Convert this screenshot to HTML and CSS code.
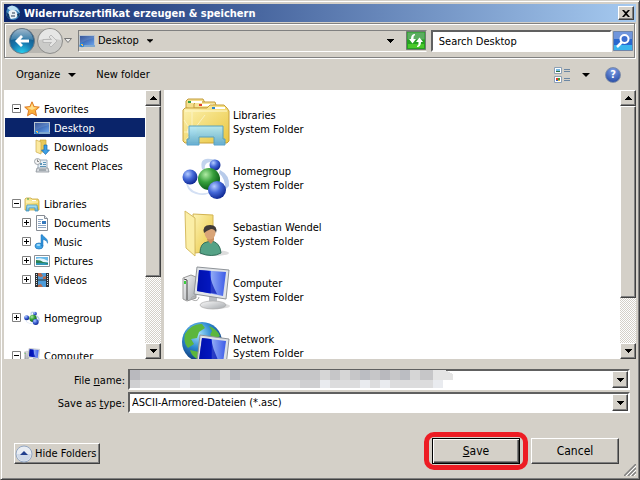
FILE: index.html
```html
<!DOCTYPE html>
<html lang="en">
<head>
    <meta charset="UTF-8">
    <meta name="viewport" content="width=device-width, initial-scale=1.0">
    <title>Widerrufszertifikat erzeugen &amp; speichern</title>
    <link rel="stylesheet" href="styles.css">
</head>
<body>
    <!-- Shared icons -->
    <svg class="sprites" aria-hidden="true">
        <defs>
            <linearGradient id="screen" x1="0" y1="0" x2="1" y2="1">
                <stop offset="0" stop-color="#1c3f8c"/><stop offset="1" stop-color="#6aa2ea"/>
            </linearGradient>
            <linearGradient id="blue-screen" x1="0" y1="0" x2="1" y2="0">
                <stop offset="0" stop-color="#0012a8"/><stop offset=".45" stop-color="#0d2be0"/><stop offset=".5" stop-color="#8fa8f4"/><stop offset="1" stop-color="#3c5be8"/>
            </linearGradient>
            <linearGradient id="folder" x1="0" y1="0" x2="1" y2="1">
                <stop offset="0" stop-color="#fdf3b4"/><stop offset="1" stop-color="#e9c640"/>
            </linearGradient>
            <linearGradient id="stand" x1="0" y1="0" x2="0" y2="1">
                <stop offset="0" stop-color="#b5eaf6"/><stop offset="1" stop-color="#5cabd6"/>
            </linearGradient>
            <radialGradient id="ball-blue" cx=".35" cy=".3" r=".7">
                <stop offset="0" stop-color="#b4ccff"/><stop offset=".5" stop-color="#4468d8"/><stop offset="1" stop-color="#122c96"/>
            </radialGradient>
            <radialGradient id="ball-green" cx=".35" cy=".3" r=".7">
                <stop offset="0" stop-color="#b0eba4"/><stop offset=".5" stop-color="#37a03c"/><stop offset="1" stop-color="#0c5e18"/>
            </radialGradient>
            <linearGradient id="grey" x1="0" y1="0" x2="1" y2="1">
                <stop offset="0" stop-color="#fafafa"/><stop offset="1" stop-color="#a4a8ac"/>
            </linearGradient>
            <radialGradient id="back" cx=".5" cy="1" r=".9">
                <stop offset="0" stop-color="#29d5f3"/><stop offset=".5" stop-color="#1577ae"/><stop offset="1" stop-color="#174b78"/>
            </radialGradient>
            <linearGradient id="gloss" x1="0" y1="0" x2="0" y2="1">
                <stop offset="0" stop-color="#e4f2fa"/><stop offset="1" stop-color="#4a8ab2"/>
            </linearGradient>
            <radialGradient id="globe" cx=".4" cy=".3" r=".7">
                <stop offset="0" stop-color="#a6e4ff"/><stop offset=".5" stop-color="#2c88d0"/><stop offset="1" stop-color="#0d3576"/>
            </radialGradient>
        </defs>
        <symbol id="i-desktop" viewBox="0 0 16 16">
            <path d="M0 2h16v12H0z" fill="#b8c4d0"/>
            <path d="M1 3h14v9H1z" fill="url(#screen)"/>
            <path d="M1 3h14v2Q6 7 1 11z" fill="#fff" opacity=".12"/>
            <path d="M0 12h16v2H0z" fill="#7ea7cf"/>
            <circle cx="3" cy="12" r="2.3" fill="#2c83d8"/>
            <path d="M2 11h1v1H2zM3 12h1v1H3z" fill="#f4d84c"/><path d="M3 11h1v1H3z" fill="#e86"/>
        </symbol>
        <symbol id="i-star" viewBox="0 0 16 16">
            <path d="M8 .8l2.1 4.8 5.2.5-3.9 3.5 1.1 5.2L8 12.1l-4.5 2.7 1.1-5.2L.7 6.1l5.2-.5z" fill="#fbb03c" stroke="#d9711a" stroke-width=".9"/>
            <path d="M8 2.5l1.5 3.7 3.6.4L8 9 3 6.700l3.500-.5z" fill="#ffdf8c"/>
        </symbol>
        <symbol id="i-downloads" viewBox="0 0 16 16">
            <path d="M6 1h6v12H6z" fill="#e8c95a" stroke="#c9a437" stroke-width=".7"/>
            <path d="M2 1l5 2v12l-5-2z" fill="#fbe9a0" stroke="#cfae4a" stroke-width=".7"/>
            <path d="M10 6h3v5h2.500L11.500 15.500 7.500 11H10z" fill="#3da0e6" stroke="#1767ac" stroke-width=".7"/>
        </symbol>
        <symbol id="i-recent" viewBox="0 0 16 16">
            <path d="M4 2h9v9H4z" fill="#e6eff5" stroke="#899bab" stroke-width=".8"/>
            <path d="M6 5h2v2H6zM9 4h3v1H9zM9 6h3v1H9zM6 8h6v1H6z" fill="#5b94b8"/>
            <path d="M3 10h11l1 4H2z" fill="#d6dade" stroke="#8a9299" stroke-width=".8"/>
            <path d="M5 12h7" stroke="#6d7880"/>
            <circle cx="3.500" cy="3.500" r="3" fill="#f3f3f3" stroke="#8d959c" stroke-width=".8"/>
            <path d="M3.500 1.500v2h1.500" fill="none" stroke="#555" stroke-width=".7"/>
        </symbol>
        <symbol id="i-library" viewBox="0 0 16 16">
            <path d="M1 3l1-1h5l1 1h6l1 2v9H1z" fill="url(#folder)" stroke="#c9a63c" stroke-width=".8"/>
            <path d="M3 3h2" stroke="#3f9d46"/><path d="M8 4.500h4" stroke="#fff"/><path d="M2 6h12" stroke="#fff6c4"/>
            <path d="M3 9h10l1 6h-3v-3H5v3H2z" fill="url(#stand)" stroke="#4596be" stroke-width=".8"/>
        </symbol>
        <symbol id="i-document" viewBox="0 0 16 16">
            <path d="M2.500.5h8l3 3v12h-11z" fill="#fff" stroke="#868c94"/>
            <path d="M10.500.5v3h3" fill="#dfe6ee" stroke="#868c94"/>
            <path d="M4 4.500h5M4 6.500h3M4 8.500h3M4 10.500h8M4 12.500h8" stroke="#8ea6c2"/>
            <path d="M8 6h4v3H8z" fill="#3679bd"/>
        </symbol>
        <symbol id="i-music" viewBox="0 0 16 16">
            <ellipse cx="5" cy="12" rx="4" ry="3" fill="#42a9ea" stroke="#1c6fb4" stroke-width=".7"/>
            <path d="M7 12V.8h1.500c1 3 6 3.200 5 8.500-.5-2.300-2-3.300-4.500-3.800V12z" fill="#2f94dc" stroke="#1c6fb4" stroke-width=".5"/>
            <ellipse cx="4.500" cy="11" rx="2" ry="1" fill="#a5dcfa"/>
        </symbol>
        <symbol id="i-pictures" viewBox="0 0 16 16">
            <path d="M.5 2.500h15v11H.5z" fill="#fff" stroke="#8b9198"/>
            <path d="M2 4h12v8H2z" fill="#69b9e8"/><path d="M2 6q6-2 12 2v1H2z" fill="#e4f6fb"/>
            <path d="M2 7q5 0 7 2l5 1v2H2z" fill="#2c8250"/><path d="M2 10q6-1 12 1v1H2z" fill="#2f96b8"/>
        </symbol>
        <symbol id="i-videos" viewBox="0 0 16 16">
            <path d="M1 1h14v14H1z" fill="#2e3338"/><path d="M4 1h8v6.500H4zM4 8.500h8V15H4z" fill="#4d9bd8"/>
            <path d="M4 1h3l2 3-2 1-3-1zM9 5l3-1v3H9zM4 15v-2l3-1 2 3z" fill="#b8694c"/>
            <path d="M2.500 2v12M13.500 2v12" stroke="#dfe6ea" stroke-dasharray="1 1"/>
        </symbol>
        <symbol id="i-homegroup" viewBox="0 0 48 48">
            <path d="M20 15Q17 3 29 5q8 0 9 7-7-6-13-3-3 2-2 7z" fill="#c3d4ee"/>
            <path d="M4 24q2 13 13 15 8 1 12-2-4 6-15 3Q3 37 4 24z" fill="#d4e0f4"/>
            <path d="M38 16q10 5 9 16l-4 4q1-11-6-17z" fill="#b8cbea"/>
            <circle cx="33" cy="11" r="5.500" fill="url(#ball-blue)"/>
            <circle cx="8" cy="23" r="7.500" fill="url(#ball-blue)"/>
            <circle cx="27" cy="25" r="11" fill="url(#ball-green)"/>
            <circle cx="35" cy="36" r="9" fill="url(#ball-blue)"/>
        </symbol>
        <symbol id="i-computer" viewBox="0 0 48 48">
            <ellipse cx="34" cy="40" rx="14" ry="3" fill="#ddd"/>
            <path d="M1 12l8-3 5 2v21l-9 3-4-2z" fill="url(#grey)" stroke="#999"/>
            <path d="M2 13l3 1v20" fill="none" stroke="#444"/><path d="M2 15h2v3H2z" fill="#3bd13e"/>
            <path d="M13 30q-7 2-2 4t6-3" fill="none" stroke="#aaa"/>
            <path d="M27 30h8v7h-8z" fill="#b9bdc2"/>
            <ellipse cx="31" cy="39" rx="13" ry="4" fill="url(#grey)" stroke="#aaa" stroke-width=".7"/>
            <path d="M15 1l32 3-3 29-32-5z" fill="#e1e4e8" stroke="#8f9499"/>
            <path d="M17 4l27 2-3 24-26-5z" fill="url(#blue-screen)"/>
            <path d="M17 4l10 1q2 12 8 23l-20-3z" fill="#0010b0" opacity=".7"/>
        </symbol>
        <symbol id="i-expand" viewBox="0 0 9 9">
            <path d="M.5.5h8v8h-8z" fill="#fff" stroke="#808080"/><path d="M2 4.500h5M4.500 2v5" stroke="#000"/>
        </symbol>
        <symbol id="i-collapse" viewBox="0 0 9 9">
            <path d="M.5.5h8v8h-8z" fill="#fff" stroke="#808080"/><path d="M2 4.500h5" stroke="#000"/>
        </symbol>
        <symbol id="i-down" viewBox="0 0 7 4"><path d="M0 0h7v1H6v1H5v1H4v1H3V3H2V2H1V1H0z"/></symbol>
        <symbol id="i-up" viewBox="0 0 7 4"><path d="M3 0h1v1h1v1h1v1h1v1H0V3h1V2h1V1h1z"/></symbol>
    </svg>

    <form class="window">
        <!-- Title bar -->
        <header class="titlebar">
            <svg class="icon" viewBox="0 0 16 16">
                <circle cx="8" cy="8" r="7" fill="#3d86bd"/>
                <path d="M2 3Q7-2 12 3l3 5-4-3-5 1z" fill="#b9dff5"/>
                <path d="M4 6q4-2 7 0l2 4-2 3-5 1-3-4z" fill="#e9f1f6"/>
                <path d="M1 7l3 2 1 5-3-2z" fill="#133e6e"/><path d="M7 8h3M6 11h4" stroke="#24364c"/><path d="M12 9l3-1-2 5z" fill="#123862"/>
            </svg>
            <h1>Widerrufszertifikat erzeugen &amp; speichern</h1>
            <button type="button" class="close" aria-label="Close">
                <svg width="8" height="7" viewBox="0 0 8 7"><path d="M0 0h2l2 2 2-2h2L5 3.500 8 7H6L4 5 2 7H0l3-3.500z"/></svg>
            </button>
        </header>

        <!-- Navigation bar -->
        <nav class="navbar">
            <button type="button" class="flat" aria-label="Back">
                <svg width="28" height="28" viewBox="0 0 28 28">
                    <path d="M14 2h14v24H14z" fill="#b9b7b2"/>
                    <circle cx="14" cy="14" r="12.500" fill="url(#back)" stroke="#6b7883"/>
                    <path d="M3 13a11 11 0 0 1 22 0q-11-3-22 0z" fill="url(#gloss)" opacity=".65"/>
                    <path d="M7 14l6-6 2 2-2.500 2.500H21v3h-8.500L15 18l-2 2z" fill="#fff"/>
                </svg>
            </button>
            <button type="button" class="flat" aria-label="Forward">
                <svg width="28" height="28" viewBox="0 0 28 28">
                    <path d="M0 2h14v24H0z" fill="#b9b7b2"/>
                    <circle cx="14" cy="14" r="12.500" fill="#cbcbc9" stroke="#8d8d8b"/>
                    <path d="M3 13a11 11 0 0 1 22 0q-11-3-22 0z" fill="#e6e6e5"/>
                    <path d="M21 14l-6-6-2 2 2.500 2.500H7v3h8.500L13 18l2 2z" fill="#e4e4e3" stroke="#aaa" stroke-width=".7"/>
                </svg>
            </button>
            <button type="button" class="flat history" aria-label="Recent pages">
                <svg width="8" height="6" viewBox="0 0 8 6"><path d="M.5.5h7L4 4.500z" fill="#eee" stroke="#777"/></svg>
            </button>
            <div class="address">
                <svg class="icon"><use href="#i-desktop"/></svg>
                <a href="#">Desktop</a>
                <svg class="arrow small"><use href="#i-down"/></svg>
                <button type="button" class="flat open" aria-label="Previous locations"><svg class="arrow"><use href="#i-down"/></svg></button>
                <button type="button" class="flat" aria-label="Refresh">
                    <svg width="20" height="19" viewBox="0 0 20 19">
                        <path d="M.5.5h19v18H.5z" fill="#25a022" stroke="#6f7c70"/><path d="M1.500 1.500h17v7h-17z" fill="#5cad60"/><path d="M2 13h16v4H2z" fill="#48c92a"/>
                        <path d="M9 3v1Q7 5 7.500 8H10l-3.500 4.500L3 8h2q0-5 4-5zM11 16v-1q2-1 1.500-4H10l3.500-4.500L17 11h-2q0 5-4 5z" fill="#fff"/>
                    </svg>
                </button>
            </div>
            <input type="text" class="search" aria-label="Search Desktop" value="Search Desktop">
            <button type="button" class="flat" aria-label="Search">
                <svg width="20" height="20" viewBox="0 0 20 20">
                    <path d="M.5.5h19v19H.5z" fill="#2868cf" stroke="#6e85aa"/><path d="M1 1h18v7H1z" fill="#7096dc"/><path d="M1 14h18v5H1z" fill="#39b4ee"/>
                    <path d="M9 11l-5 5" stroke="#fff" stroke-width="2.500"/><circle cx="11.500" cy="8" r="4" fill="#3d6fcf" stroke="#fff" stroke-width="2"/>
                </svg>
            </button>
        </nav>

        <!-- Toolbar -->
        <div class="toolbar">
            <button type="button" class="flat">Organize <svg class="arrow"><use href="#i-down"/></svg></button>
            <button type="button" class="flat">New folder</button>
            <button type="button" class="flat view" aria-label="Change your view">
                <svg width="16" height="16" viewBox="0 0 16 16">
                    <path d="M.5.5h7v6h-7zM.5 9.500h7v6h-7z" fill="#fff" stroke="#8da0b4"/>
                    <path d="M2 2h4v2H2z" fill="#76b9e4"/><path d="M2 4h4v1H2z" fill="#2f6d3a"/>
                    <path d="M2 11h2v2H2z" fill="#d83a2c"/><path d="M4 11h2v2H4z" fill="#3a9d3c"/><path d="M2 13h2v1H2z" fill="#345bc8"/><path d="M4 13h2v1H4z" fill="#e8b92e"/>
                    <path d="M10 2.500h6M10 4.500h6M10 11.500h6M10 13.500h6" stroke="#6c87a3"/>
                </svg>
                <svg class="arrow"><use href="#i-down"/></svg>
            </button>
            <button type="button" class="flat help" aria-label="Help">?</button>
        </div>

        <!-- Folder tree and file list -->
        <main class="panes">
            <div class="pane side">
                <ul class="tree">
                    <li><svg class="box"><use href="#i-collapse"/></svg><svg class="icon"><use href="#i-star"/></svg><span>Favorites</span></li>
                    <li class="sub selected"><i class="box"></i><svg class="icon"><use href="#i-desktop"/></svg><span>Desktop</span></li>
                    <li class="sub"><i class="box"></i><svg class="icon"><use href="#i-downloads"/></svg><span>Downloads</span></li>
                    <li class="sub"><i class="box"></i><svg class="icon"><use href="#i-recent"/></svg><span>Recent Places</span></li>
                    <li class="group"><svg class="box"><use href="#i-collapse"/></svg><svg class="icon"><use href="#i-library"/></svg><span>Libraries</span></li>
                    <li class="sub"><svg class="box"><use href="#i-expand"/></svg><svg class="icon"><use href="#i-document"/></svg><span>Documents</span></li>
                    <li class="sub"><svg class="box"><use href="#i-expand"/></svg><svg class="icon"><use href="#i-music"/></svg><span>Music</span></li>
                    <li class="sub"><svg class="box"><use href="#i-expand"/></svg><svg class="icon"><use href="#i-pictures"/></svg><span>Pictures</span></li>
                    <li class="sub"><svg class="box"><use href="#i-expand"/></svg><svg class="icon"><use href="#i-videos"/></svg><span>Videos</span></li>
                    <li class="group"><svg class="box"><use href="#i-expand"/></svg><svg class="icon"><use href="#i-homegroup"/></svg><span>Homegroup</span></li>
                    <li class="group"><svg class="box"><use href="#i-collapse"/></svg><svg class="icon"><use href="#i-computer"/></svg><span>Computer</span></li>
                </ul>
                <div class="scrollbar">
                    <button type="button" aria-label="Scroll up"><svg class="arrow"><use href="#i-up"/></svg></button>
                    <div class="track"><div class="thumb"></div></div>
                    <button type="button" aria-label="Scroll down"><svg class="arrow"><use href="#i-down"/></svg></button>
                </div>
            </div>
            <div class="pane content">
                <ul class="files">
                    <li>
                        <svg class="large" viewBox="0 0 48 48">
                            <path d="M4 10V3l2-2h15l2 4v8z" fill="#f4de8c" stroke="#c29c3c"/><path d="M12 10V6l2-2h19l2 6z" fill="#f6e396" stroke="#c29c3c"/>
                            <path d="M9 3h11v2H9zM20 6h11v2H20z" fill="#fff"/><path d="M6 3h3v2H6z" fill="#37a046"/><path d="M17 6h3v2h-3z" fill="#e2422e"/>
                            <path d="M1 12l2-2h22l3-3h14l3 3 2 3v30l-2 2H3l-2-2z" fill="url(#folder)" stroke="#c8a03a"/>
                            <path d="M33 9h10v2H33z" fill="#fff"/><path d="M30 9h3v2h-3z" fill="#2f86cc"/>
                            <path d="M3 13h42" stroke="#fff9d0"/>
                            <path d="M10 34L2 22M10 34l0-20M10 34L23 17M10 34H2M10 34l-7 9" stroke="#fffbe0" opacity=".6"/>
                            <circle cx="10" cy="33" r="5" fill="#fff" opacity=".5"/>
                            <path d="M7 28h34v13h2v6H32v-8H17v8H5v-6h2z" fill="url(#stand)" stroke="#4d9cc4" opacity=".92"/>
                        </svg>
                        <p>Libraries<br>System Folder</p>
                    </li>
                    <li>
                        <svg class="large"><use href="#i-homegroup"/></svg>
                        <p>Homegroup<br>System Folder</p>
                    </li>
                    <li>
                        <svg class="large" viewBox="0 0 48 48">
                            <ellipse cx="32" cy="43" rx="15" ry="3" fill="#ddd"/>
                            <path d="M11 4l20 1v36l-18 2z" fill="url(#folder)" stroke="#d3b452"/>
                            <path d="M3 1l10 7v38L4 38z" fill="#fbeea6" stroke="#d6bc62"/>
                            <path d="M18 43q0-10 7-11l4-1q9 1 10 12-9 5-21 0z" fill="#55a286" stroke="#34705c"/>
                            <path d="M25 30l4 4 3-4v-4h-6z" fill="#c98f60"/>
                            <ellipse cx="28" cy="23" rx="5.500" ry="6.500" fill="#d9a477"/>
                            <path d="M22 23q-2-8 6-8 8 0 6 8-1-4-5-4-5 2-7 4z" fill="#3f3a38"/>
                        </svg>
                        <p>Sebastian Wendel<br>System Folder</p>
                    </li>
                    <li>
                        <svg class="large"><use href="#i-computer"/></svg>
                        <p>Computer<br>System Folder</p>
                    </li>
                    <li>
                        <svg class="large" viewBox="0 0 48 48">
                            <circle cx="20" cy="20" r="20" fill="url(#globe)"/>
                            <path d="M3 12Q10 1 20 2l3 4-6 4-2 6-6 1 3 5-6 4q-5-6-3-14zM27 4q8 3 11 10l-5 3-5-4 2-4zM8 28l9 2 1 8q-8-2-10-10z" fill="#5cb63c"/>
                            <path d="M18 13l29 4-3 27-29-4z" fill="#dde1e6" stroke="#8f9499"/>
                            <path d="M20 16l24 3-3 22-24-3z" fill="url(#blue-screen)"/>
                            <path d="M20 16l9 1q2 11 8 23l-20-2z" fill="#0010b0" opacity=".7"/>
                        </svg>
                        <p>Network<br>System Folder</p>
                    </li>
                </ul>
                <div class="scrollbar">
                    <button type="button" aria-label="Scroll up"><svg class="arrow"><use href="#i-up"/></svg></button>
                    <div class="track"><div class="thumb"></div></div>
                    <button type="button" aria-label="Scroll down"><svg class="arrow"><use href="#i-down"/></svg></button>
                </div>
            </div>
        </main>

        <!-- File name and type -->
        <footer class="bottom">
            <div class="fields">
                <label for="file-name">File <u>n</u>ame:</label>
                <div class="combo">
                    <input type="text" id="file-name">
                    <button type="button" aria-label="Show names"><svg class="arrow"><use href="#i-down"/></svg></button>
                    <!-- Hidden file name -->
                    <svg class="mosaic" width="323" height="18" viewBox="0 0 323 18" shape-rendering="crispEdges">
                        <path d="M0 0h315l8 4v6H0z" fill="#c6c6c8"/><path d="M0 10h313v8H0z" fill="#dcdcdd"/>
                        <path d="M0 0h10v10H0zM80 0h10v10H80zM140 0h10v10h-10zM250 0h10v10h-10z" fill="#b9b9be"/>
                        <path d="M90 0h10v10H90zM190 0h10v10h-10zM210 0h10v10h-10zM280 0h10v10h-10z" fill="#d6d6d6"/>
                        <path d="M60 0h10v10H60zM100 0h10v10h-10zM230 0h10v10h-10zM270 0h10v10h-10z" fill="#bbbdc2"/>
                        <path d="M303 0h12l8 4v6h-20z" fill="#e4e4e4"/>
                        <path d="M0 10h10v8H0zM110 10h20v8h-20zM170 10h20v8h-20z" fill="#cfcfd1"/>
                        <path d="M50 10h10v8H50zM190 10h10v8h-10zM230 10h10v8h-10zM250 10h10v8h-10zM303 10h10v8h-10z" fill="#e9ebef"/>
                    </svg>
                </div>
                <label for="file-type">Save as <u>t</u>ype:</label>
                <div class="combo">
                    <select id="file-type"><option>ASCII-Armored-Dateien (*.asc)</option></select>
                    <button type="button" aria-label="Show types"><svg class="arrow"><use href="#i-down"/></svg></button>
                </div>
            </div>
            <div class="actions">
                <button type="button" class="push hide">
                    <svg width="18" height="18" viewBox="0 0 18 18"><circle cx="9" cy="9" r="8" fill="#e9edf3" stroke="#93a7c4"/><path d="M2 9a7 7 0 0 0 14 0z" fill="#cfd9e8"/><path d="M9 6l4 4H5z" fill="#213f8e"/></svg>
                    Hide Folders
                </button>
                <div class="marked"><button type="submit" class="push default"><u>S</u>ave</button></div>
                <button type="button" class="push">Cancel</button>
            </div>
            <svg class="grip" width="12" height="12" viewBox="0 0 12 12"><path d="M0 12L12 0M4 12l8-8M8 12l4-4" stroke="#808080" stroke-width="1.500"/><path d="M2 12L12 2M6 12l6-6M10 12l2-2" stroke="#fff"/></svg>
        </footer>
    </form>
</body>
</html>
```
FILE: styles.css
```css
* {
    box-sizing: border-box;
}
body {
    margin: 0;
    background: #d4d0c8;
    color: #000;
}
body, button, input, select {
    font-family: "DejaVu Sans Condensed", "DejaVu Sans", sans-serif;
    font-size: 11px;
    line-height: 14px;
}
ul, p, h1 {
    margin: 0;
    padding: 0;
    list-style: none;
}
svg {
    display: block;
    flex: none;
}
.sprites {
    position: absolute;
    width: 0;
    height: 0;
}
.icon {
    width: 16px;
    height: 16px;
}
.arrow {
    width: 7px;
    height: 4px;
}
.small {
    width: 6px;
}
.window {
    display: flex;
    flex-direction: column;
    height: 100vh;
    min-height: 400px;
    padding: 3px;
    border: 1px solid;
    border-color: #d4d0c8 #404040 #404040 #d4d0c8;
    box-shadow: inset 1px 1px #fff, inset -1px -1px #808080;
}

/* Title bar */
.titlebar {
    display: flex;
    align-items: center;
    gap: 3px;
    height: 18px;
    padding: 0 2px 0 1px;
    background: linear-gradient(to right, #0a246a, #a6caf0);
    color: #fff;
}
.titlebar h1 {
    flex: 1;
    padding-top: 2px;
    font-size: 11px;
    font-weight: bold;
}
.close {
    display: flex;
    align-items: center;
    justify-content: center;
    width: 16px;
    height: 14px;
    padding: 0;
}
.close, .scrollbar button, .thumb, .combo button, .push {
    background: #d4d0c8;
    border: 1px solid;
    border-color: #fff #404040 #404040 #fff;
    box-shadow: inset -1px -1px #808080;
}

/* Navigation bar */
.navbar {
    display: flex;
    align-items: center;
    height: 35px;
    margin: 1px 1px 1px 0;
    padding: 0 1px 0 3px;
    border: 1px solid #808080;
    box-shadow: inset 1px 1px #fff, 1px 1px #fff;
}
.flat {
    display: flex;
    align-items: center;
    padding: 0;
    border: 0;
    background: none;
    color: inherit;
}
.history {
    padding: 0 6px 0 0;
}
.address {
    display: flex;
    align-items: center;
    flex: 1;
    height: 22px;
    border: 1px solid;
    border-color: #808080 #d4d0c8 #fff #808080;
}
.address a {
    margin: 0 8px 0 3px;
    color: #000;
    text-decoration: none;
}
.open {
    margin: 0 12px 0 auto;
}
.search {
    width: 29%;
    height: 22px;
    margin: 0 1px 0 4px;
    padding: 1px 6px 0;
    border: 2px solid;
    border-color: #606060 #fff #fff #606060;
    background: #fff;
}

/* Toolbar */
.toolbar {
    display: flex;
    align-items: center;
    gap: 20px;
    height: 31px;
    padding: 0 15px 0 12px;
}
.toolbar .flat {
    gap: 8px;
}
.toolbar .view {
    gap: 12px;
    margin-right: -5px;
    margin-left: auto;
}
.toolbar .arrow {
    width: 8px;
}
.toolbar .help {
    justify-content: center;
    width: 16px;
    height: 16px;
    border: 1px solid #7d8ca8;
    border-radius: 50%;
    background: radial-gradient(circle at 50% 20%, #7f9fe6, #1c429e);
    color: #fff;
    font-weight: bold;
}

/* Panes */
.panes {
    display: flex;
    flex: 1;
    gap: 3px;
    min-height: 0;
}
.pane {
    display: flex;
    background: #fff;
    overflow: hidden;
}
.side {
    width: 157px;
}
.content {
    flex: 1;
}
.tree {
    flex: 1;
    padding: 9px 0 0 1px;
}
.tree li {
    display: flex;
    align-items: center;
    height: 19px;
    padding-left: 7px;
}
.tree .sub {
    padding-left: 17px;
}
.tree .group {
    margin-top: 19px;
}
.tree .selected {
    background: #0a246a;
    color: #fff;
}
.tree .icon {
    margin: 0 4px 0 3px;
}
.tree span, .files p, .fields label {
    padding-top: 2px;
}
.box {
    width: 9px;
    height: 9px;
}
.files {
    display: flex;
    flex: 1;
    flex-direction: column;
    gap: 8px;
    padding: 8px 18px;
}
.files li {
    display: flex;
    align-items: center;
    gap: 3px;
}
.large {
    width: 48px;
    height: 48px;
}
.scrollbar {
    display: flex;
    flex-direction: column;
    width: 16px;
}
.scrollbar button {
    display: flex;
    align-items: center;
    justify-content: center;
    height: 16px;
    padding: 0;
}
.track {
    flex: 1;
    background: repeating-conic-gradient(#fff 0 25%, #d4d0c8 0 50%) 0 0 / 2px 2px;
}
.thumb {
    height: 72%;
}
.content .thumb {
    height: 81%;
}

/* Bottom area */
.bottom {
    position: relative;
    padding: 10px 6px 6px 9px;
}
.fields {
    display: grid;
    grid-template-columns: 112px 1fr;
    gap: 2px 3px;
    align-items: center;
}
.fields label {
    text-align: right;
}
.combo {
    position: relative;
    display: flex;
    height: 21px;
    border: 2px solid;
    border-color: #606060 #fff #fff #606060;
    background: #fff;
}
.combo input, .combo select {
    flex: 1;
    min-width: 0;
    padding: 1px 2px 0;
    border: 0;
    background: none;
    color: #000;
    appearance: none;
}
.combo button {
    display: flex;
    align-items: center;
    justify-content: center;
    width: 16px;
    padding: 0;
}
.mosaic {
    position: absolute;
    top: -1px;
    left: 0;
}
.actions {
    display: flex;
    align-items: center;
    margin-top: 19px;
    padding-right: 11px;
}
.push {
    width: 88px;
    height: 26px;
    padding: 0;
    font-size: 12px;
}
.hide {
    display: flex;
    align-items: center;
    gap: 2px;
    width: 86px;
    height: 21px;
    margin: 5px auto 0 1px;
    font-size: 11px;
}
.default {
    border-color: #000;
    box-shadow: inset 1px 1px #fff, inset -1px -1px #404040, inset -2px -2px #808080;
}
.marked {
    margin-right: 3px;
    padding: 1px 3px;
    border: 5px solid #ed1c24;
    border-radius: 10px;
}
.grip {
    position: absolute;
    right: 0;
    bottom: 0;
}
```
